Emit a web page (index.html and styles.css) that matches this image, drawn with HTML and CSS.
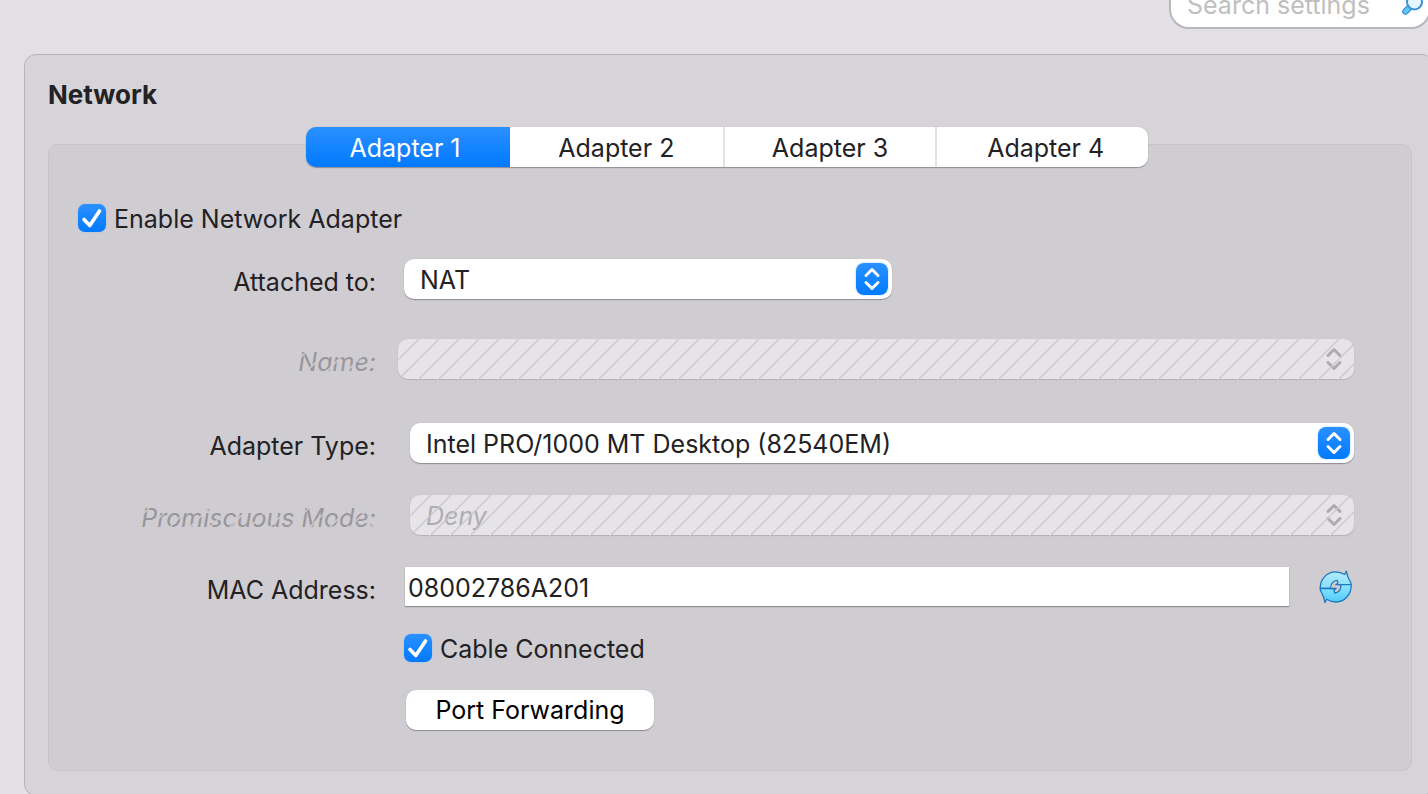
FILE: index.html
```html
<!DOCTYPE html>
<html lang="en">
<head>
<meta charset="utf-8">
<title>Network</title>
<link rel="stylesheet" href="styles.css">
</head>
<body>
<header class="toolbar">
  <div class="search">
    <input class="search-input" type="search" placeholder="Search settings" aria-label="Search settings">
    <svg class="search-icon" viewBox="0 0 24 24" aria-hidden="true">
      <path d="M8 15L4.500 18.500" stroke="#2a84c9" stroke-width="6.500" stroke-linecap="round"/>
      <path d="M8 15L4.500 18.500" stroke="#5cc8fb" stroke-width="4.500" stroke-linecap="round"/>
      <circle cx="13.500" cy="9" r="7.500" fill="#e6f6ff" stroke="#3f93d2" stroke-width="2"/>
    </svg>
  </div>
</header>
<main class="panel">
  <h1 class="title">Network</h1>
  <div class="tabs" role="tablist">
    <button class="tab tab-active" type="button" role="tab" aria-selected="true">Adapter 1</button>
    <button class="tab" type="button" role="tab" aria-selected="false">Adapter 2</button>
    <button class="tab" type="button" role="tab" aria-selected="false">Adapter 3</button>
    <button class="tab" type="button" role="tab" aria-selected="false">Adapter 4</button>
  </div>
  <form class="group">
    <label class="check"><input type="checkbox" checked><span>Enable Network Adapter</span></label>

    <div class="field field-attached">
      <label class="label" for="attached">Attached to:</label>
      <div class="select select-short">
        <select id="attached"><option>NAT</option></select>
        <svg class="arrows" viewBox="0 0 32 32" aria-hidden="true"><path d="M10 12.500l6-6 6 6M10 19.500l6 6 6-6"/></svg>
      </div>
    </div>

    <div class="field field-name">
      <label class="label label-off" for="name">Name:</label>
      <div class="select select-off select-wide">
        <select id="name" disabled><option></option></select>
        <svg class="arrows" viewBox="0 0 32 32" aria-hidden="true"><path d="M10 12.500l6-6 6 6M10 19.500l6 6 6-6"/></svg>
      </div>
    </div>

    <div class="field field-type">
      <label class="label" for="type">Adapter Type:</label>
      <div class="select select-inset">
        <select id="type"><option>Intel PRO/1000 MT Desktop (82540EM)</option></select>
        <svg class="arrows" viewBox="0 0 32 32" aria-hidden="true"><path d="M10 12.500l6-6 6 6M10 19.500l6 6 6-6"/></svg>
      </div>
    </div>

    <div class="field">
      <label class="label label-off" for="promisc">Promiscuous Mode:</label>
      <div class="select select-off select-inset">
        <select id="promisc" disabled><option>Deny</option></select>
        <svg class="arrows" viewBox="0 0 32 32" aria-hidden="true"><path d="M10 12.500l6-6 6 6M10 19.500l6 6 6-6"/></svg>
      </div>
    </div>

    <div class="field">
      <label class="label" for="mac">MAC Address:</label>
      <div class="mac">
        <input class="mac-input" id="mac" type="text" value="08002786A201">
        <button class="refresh" type="button" aria-label="Generate new MAC address">
          <svg viewBox="0 0 34 34" aria-hidden="true">
            <defs>
              <linearGradient id="top" x1="0" y1="0" x2="0" y2="1"><stop offset="0" stop-color="#b4ecff"/><stop offset="1" stop-color="#86defc"/></linearGradient>
              <linearGradient id="bottom" x1="0" y1="0" x2="0" y2="1"><stop offset="0" stop-color="#8ee6ff"/><stop offset="1" stop-color="#4fcbfa"/></linearGradient>
            </defs>
            <g stroke="#2278bd" stroke-width="1.300" stroke-linejoin="round">
              <path fill="url(#top)" d="M1.200 18.500C1 9 8 1.800 16.500 1.800c3.500 0 6.500 1 9.300 2.700L27.300 1.300 29 7l2 4c.8 1.200 1.200 2.300 1.200 3.700H16.700l2.200-1.700-.6-2.600c-4 .2-6.800 3.500-6.800 8.100z"/>
              <path fill="url(#bottom)" d="M32.200 14.700C32.500 24.500 25.500 32 17 32c-3.500 0-6.700-1-9.500-2.700L6 32.500 4.500 27 2.500 22.500c-.8-1.200-1.300-2.500-1.300-4h16l-2.200 1.700.8 2.800c3.800-.5 6.200-3.300 6.200-8.300z"/>
            </g>
            <path fill="#cfcdd2" d="M12.500 18c.2-3.500 2-6 5.200-6.800l.3 1.500-3 2.500H21c0 3.300-1.700 5.800-4.600 6.500l-.4-1.300 3-2.800z"/>
            <path fill="none" stroke="#2278bd" stroke-width="1.300" d="M11.500 18.500h5.700M16.700 14.700h5.300"/>
          </svg>
        </button>
      </div>
    </div>

    <div class="field field-low">
      <label class="check"><input type="checkbox" checked><span>Cable Connected</span></label>
    </div>
    <div class="field field-low">
      <button class="push" type="button">Port Forwarding</button>
    </div>
  </form>
</main>
</body>
</html>
```
FILE: styles.css
```css
* { box-sizing: border-box; }

body {
  margin: 0;
  height: 100vh;
  overflow: hidden;
  background: #e2e0e5;
  color: #222124;
  font-family: Inter, "Liberation Sans", sans-serif;
  font-size: 25px;
  line-height: 32px;
}

button, input, select { font: inherit; color: inherit; margin: 0; }

.toolbar {
  display: flex;
  justify-content: flex-end;
  align-items: flex-end;
  height: 54px;
  padding-bottom: 25px;
}
.search {
  display: flex;
  flex: none;
  align-items: center;
  width: 262px;
  height: 48px;
  margin-right: -3px;
  padding: 0 4px 0 16px;
  background: #fff;
  border: 2px solid #b9b7bd;
  border-radius: 20px;
}
.search-input {
  flex: 1;
  min-width: 0;
  padding: 0;
  border: 0;
  background: none;
  outline: none;
}
.search-input::placeholder { color: #bfbfbf; opacity: 1; }
.search-icon { flex: none; width: 24px; height: 24px; }

.panel {
  margin: 0 -6px 0 24px;
  padding: 24px 21px 24px 23px;
  background: #d6d4d9;
  border: 1px solid #b6b4b9;
  border-radius: 12px;
}
.title {
  margin: 0 0 16px;
  font-size: 26px;
  font-weight: 700;
  line-height: 32px;
}

.tabs {
  position: relative;
  display: flex;
  width: 842px;
  margin: 0 auto -23px;
  left: -3px;
  border-radius: 10px;
  box-shadow: 0 1px 1px #8f8d93, 0 0 1px #a9a7ac;
}
.tab {
  flex: 1 1 212px;
  height: 40px;
  padding: 2px 0 0;
  border: 0;
  border-left: 2px solid #e2e1e3;
  background: #fff;
}
.tab-active {
  flex: 0 0 204px;
  padding-right: 6px;
  border-left: 0;
  border-radius: 10px 0 0 10px;
  background: linear-gradient(#2b90ff, #007aff);
  color: #fff;
}
.tab-active + .tab { border-left: 0; }
.tab:last-child { padding-left: 6px; border-radius: 0 10px 10px 0; }

.group {
  padding: 59px 57px 40px 29px;
  background: #cfcdd2;
  border: 1px solid #c6c4c9;
  border-radius: 10px;
}

.check { display: flex; width: fit-content; align-items: center; gap: 8px; height: 28px; }
.check span { padding-top: 2px; }
.check input {
  appearance: none;
  position: relative;
  width: 28px;
  height: 28px;
  border-radius: 7px;
  background: linear-gradient(#2b90ff, #007aff);
  box-shadow: 0 0 2px #9dbde6;
}
.check input:checked::after {
  content: "";
  position: absolute;
  inset: 0;
  background: url("data:image/svg+xml,%3Csvg xmlns='http://www.w3.org/2000/svg' viewBox='0 0 28 28'%3E%3Cpath d='M6 15.500l5.800 6L21.500 7' fill='none' stroke='white' stroke-width='3.600' stroke-linecap='round' stroke-linejoin='round'/%3E%3C/svg%3E");
}

.field {
  display: grid;
  grid-template-columns: 298px minmax(0, 1fr);
  column-gap: 28px;
  align-items: start;
  margin-top: 32px;
}
.field-attached { margin-top: 27px; }
.field-name { margin-top: 40px; }
.field-type { margin-top: 44px; }
.field-low { margin-top: 28px; }
.field-low > * { grid-column: 2; justify-self: start; }

.label { position: relative; justify-self: end; padding-top: 7px; }
.label-off { color: #98969b; font-style: italic; }

.select { position: relative; height: 40px; }
.select-short { width: 488px; }
.select-wide { margin-left: -6px; }
.select-inset { margin-left: 6px; }
.select select {
  appearance: none;
  display: block;
  width: 100%;
  height: 40px;
  padding: 2px 48px 0 16px;
  border: 0;
  border-radius: 10px;
  background: #fff;
  box-shadow: 0 1px 1px #8f8d93, 0 0 1px #b4b2b7;
}
.select-off select {
  background: #e6e4e8;
  color: #aeadb1;
  font-style: italic;
  opacity: 1;
  box-shadow: 0 1px 1px #b3b1b6, 0 0 1px #c0bec3;
}
.arrows {
  position: absolute;
  top: 4px;
  right: 4px;
  width: 32px;
  height: 32px;
  border-radius: 8px;
  background: linear-gradient(#2b90ff, #007aff);
  box-shadow: 0 0 2px #8fc4ff;
  fill: none;
  stroke: #fff;
  stroke-width: 3;
  stroke-linecap: round;
  stroke-linejoin: round;
  pointer-events: none;
}
.select-off .arrows { background: none; box-shadow: none; stroke: #adabaf; }

/* Hatching drawn over disabled controls and their labels. */
.select-off::after, .label-off::after {
  content: "";
  position: absolute;
  inset: 0 -1px -3px 0;
  background: linear-gradient(135deg, transparent 47%, #cac8cd 48%, #cac8cd 52%, transparent 53%) 1px 0 / 20px 20px;
  pointer-events: none;
}
.label-off::after {
  background-image: linear-gradient(135deg, transparent 47%, #cfcdd2 48%, #cfcdd2 52%, transparent 53%);
}

.mac { display: flex; align-items: center; gap: 30px; }
.mac-input {
  flex: 1;
  min-width: 0;
  height: 39px;
  margin-left: 1px;
  padding: 2px 3px 0;
  border: 0;
  background: #fff;
  box-shadow: 0 1px 1px #8f8d93, 0 0 1px #b4b2b7;
}
.refresh { display: block; width: 34px; height: 34px; margin-right: 1px; padding: 0; border: 0; background: none; }
.refresh svg { display: block; width: 34px; height: 34px; }

.push {
  width: 248px;
  height: 40px;
  margin-left: 2px;
  padding: 0;
  border: 0;
  border-radius: 10px;
  background: #fff;
  color: #000;
  box-shadow: 0 1px 1px #8f8d93, 0 0 1px #b4b2b7;
}
```
